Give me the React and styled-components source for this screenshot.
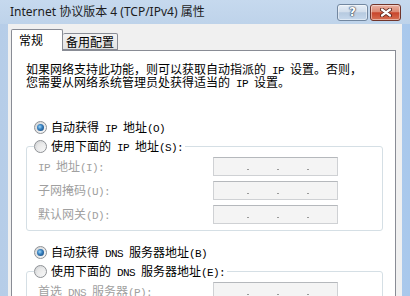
import React from 'react';
import styled, { createGlobalStyle } from 'styled-components';

const GlobalStyle = createGlobalStyle`
  html, body {
    margin: 0;
    padding: 0;
    background: #bcd2ea;
    overflow: hidden;
  }
`;

const cjk = `'Noto Sans CJK SC', 'Noto Sans', sans-serif`;

const Window = styled.div`
  width: 410px;
  height: 296px;
  display: flex;
  flex-direction: column;
  overflow: hidden;
  background: linear-gradient(to right, #b6cde8 0%, #c4d8ee 40%, #bdd3eb 70%, #a9c8ec 100%);
  font-family: ${cjk};
  font-size: 12px;
  line-height: 13px;
  color: #000;
`;

const TitleBar = styled.div`
  height: 24px;
  flex-shrink: 0;
  display: flex;
  align-items: flex-start;
  padding: 0 9px 0 10px;
  box-sizing: border-box;
  background: linear-gradient(#c6d9ee, #bed3ea);
`;

const Title = styled.div`
  flex: 1;
  margin-top: 4px;
  line-height: 16px;
  font-family: 'Noto Sans', 'Noto Sans CJK SC', sans-serif;
  font-size: 12px;
  color: #1c1c1c;
  white-space: nowrap;
`;

const Caption = styled.div`
  display: flex;
  gap: 2px;
  margin-top: 4px;
`;

const CaptionButton = styled.div`
  width: 31px;
  height: 17px;
  box-sizing: border-box;
  border-radius: 3px;
  display: flex;
  align-items: center;
  justify-content: center;
  border: 1px solid ${(p) => (p.$close ? '#71352b' : '#7287a0')};
  background: ${(p) =>
    p.$close
      ? 'linear-gradient(#eab1a3 0%, #dc8a74 45%, #c8452b 52%, #d66f52 100%)'
      : 'linear-gradient(#e6eef7 0%, #d2deec 45%, #b6cae0 52%, #c6d8ec 100%)'};
  box-shadow: inset 0 0 0 1px rgba(255, 255, 255, 0.45);
  color: #fff;
  font-family: 'DejaVu Sans', sans-serif;
  font-weight: bold;
  font-size: 12px;
  line-height: 15px;
  text-shadow: 0 0 1px #2b3b52, 0 0 1px #2b3b52, 0 0 2px #2b3b52;
`;

const Body = styled.div`
  flex: 1;
  margin: 0 8px;
  padding: 5px 6px 0 3px;
  display: flex;
  flex-direction: column;
  background: #f0f0f0;
`;

const TabStrip = styled.div`
  display: flex;
  align-items: flex-end;
  height: 22px;
  margin-bottom: -1px;
  position: relative;
  z-index: 1;
`;

const Tab = styled.div`
  box-sizing: border-box;
  height: ${(p) => (p.$active ? '22px' : '17px')};
  padding: ${(p) => (p.$active ? '0 19px 0 7px' : '0 3px 0 3px')};
  line-height: ${(p) => (p.$active ? '20px' : '16px')};
  border: 1px solid #898c95;
  border-bottom: ${(p) => (p.$active ? 'none' : '1px solid #898c95')};
  border-left: ${(p) => (p.$active ? '1px solid #898c95' : 'none')};
  border-radius: 2px 2px 0 0;
  background: ${(p) => (p.$active ? '#fff' : 'linear-gradient(#f3f3f3, #e3e3e3)')};
  margin-bottom: ${(p) => (p.$active ? '0' : '1px')};
`;

const Panel = styled.div`
  flex: 1;
  background: #fff;
  border: 1px solid #898c95;
  padding: 11px 12px 0 14px;
`;

const Description = styled.div`
  display: flex;
  flex-direction: column;
`;

const Line = styled.div`
  height: 13px;
  line-height: 13px;
  white-space: nowrap;
`;

const A = styled.span`
  font-family: 'Liberation Mono', monospace;
  font-size: 11px;
  letter-spacing: -0.6px;
`;

const RadioRow = styled.div`
  display: flex;
  align-items: center;
  gap: 4px;
  height: 18px;
  line-height: 18px;
  margin: ${(p) => p.$margin || '0'};
  padding-left: ${(p) => (p.$legend ? '0' : '8px')};
  padding-right: ${(p) => (p.$legend ? '2px' : '0')};
  white-space: nowrap;
`;

const RadioText = styled.span`
  height: 18px;
  line-height: 18px;
`;

const RadioDot = styled.span`
  width: 13px;
  height: 13px;
  box-sizing: border-box;
  border-radius: 50%;
  border: 1px solid #8e9195;
  background: linear-gradient(135deg, #d2d4d6, #fbfbfb);
  display: flex;
  align-items: center;
  justify-content: center;
  flex-shrink: 0;

  &::after {
    content: '';
    width: 7px;
    height: 7px;
    border-radius: 50%;
    background: ${(p) =>
      p.$checked
        ? 'radial-gradient(circle at 40% 40%, #9fd8fa 0, #3a82c0 40%, #0e3b6e 100%)'
        : 'linear-gradient(135deg, #e2e2e2, #f6f6f6)'};
  }
`;

const Group = styled.fieldset`
  margin: 1px 0 0;
  padding: 2px 0 6px 7px;
  border: 1px solid #d5dfe5;
  border-radius: 3px;
  min-inline-size: 0;
`;

const Legend = styled.legend`
  padding: 0;
  margin: 0;
  height: 18px;
  line-height: 18px;
`;

const Rows = styled.div`
  display: flex;
  flex-direction: column;
  gap: 5px;
  padding-left: 4px;
`;

const FieldRow = styled.div`
  display: grid;
  grid-template-columns: 175px 125px;
  align-items: center;
  height: 19px;
`;

const FieldLabel = styled.span`
  color: #a0a0a0;
  white-space: nowrap;
`;

const IpBox = styled.div`
  height: 19px;
  box-sizing: border-box;
  border: 1px solid #cfd1d4;
  border-top-color: #b5b8bc;
  background: #f4f4f4;
  display: flex;
  align-items: flex-end;
  padding: 0 0 5px 33px;
  gap: 28px;
`;

const Dot = styled.span`
  width: 2px;
  height: 1px;
  background: #9a9a9a;
`;

const Radio = ({ checked, legend, margin, children }) => (
  <RadioRow $legend={legend} $margin={margin}>
    <RadioDot $checked={checked} />
    <RadioText>{children}</RadioText>
  </RadioRow>
);

const IpField = ({ children }) => (
  <FieldRow>
    <FieldLabel>{children}</FieldLabel>
    <IpBox>
      <Dot />
      <Dot />
      <Dot />
    </IpBox>
  </FieldRow>
);

function App() {
  return (
    <Window>
      <GlobalStyle />
      <TitleBar>
        <Title>Internet 协议版本 4 (TCP/IPv4) 属性</Title>
        <Caption>
          <CaptionButton>?</CaptionButton>
          <CaptionButton $close>
            <svg width="12" height="9" viewBox="0 0 12 9">
              <path d="M2 1.5 L10 7.5 M10 1.5 L2 7.5" stroke="#5a2119" strokeWidth="4" strokeLinecap="round" />
              <path d="M2 1.5 L10 7.5 M10 1.5 L2 7.5" stroke="#fff" strokeWidth="2.2" strokeLinecap="round" />
            </svg>
          </CaptionButton>
        </Caption>
      </TitleBar>
      <Body>
        <TabStrip>
          <Tab $active>常规</Tab>
          <Tab>备用配置</Tab>
        </TabStrip>
        <Panel>
          <Description>
            <Line>
              如果网络支持此功能，则可以获取自动指派的<A> IP </A>设置。否则，
            </Line>
            <Line>
              您需要从网络系统管理员处获得适当的<A> IP </A>设置。
            </Line>
          </Description>
          <Radio checked margin="30px 0 0">
            自动获得<A> IP </A>地址<A>(O)</A>
          </Radio>
          <Group>
            <Legend>
              <Radio legend>
                使用下面的<A> IP </A>地址<A>(S):</A>
              </Radio>
            </Legend>
            <Rows>
              <IpField>
                <A>IP </A>地址<A>(I):</A>
              </IpField>
              <IpField>
                子网掩码<A>(U):</A>
              </IpField>
              <IpField>
                默认网关<A>(D):</A>
              </IpField>
            </Rows>
          </Group>
          <Radio checked margin="12px 0 0">
            自动获得<A> DNS </A>服务器地址<A>(B)</A>
          </Radio>
          <Group>
            <Legend>
              <Radio legend>
                使用下面的<A> DNS </A>服务器地址<A>(E):</A>
              </Radio>
            </Legend>
            <Rows>
              <IpField>
                首选<A> DNS </A>服务器<A>(P):</A>
              </IpField>
            </Rows>
          </Group>
        </Panel>
      </Body>
    </Window>
  );
}

export default App;
